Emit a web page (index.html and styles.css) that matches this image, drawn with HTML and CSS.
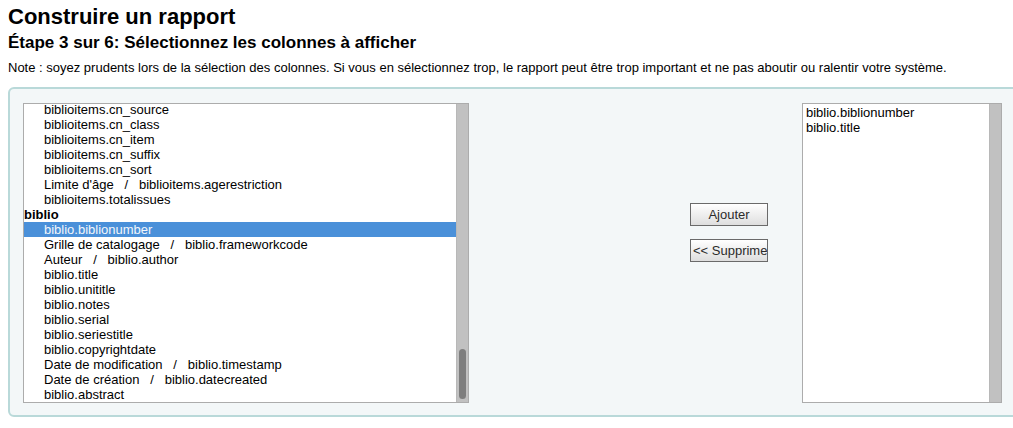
FILE: index.html
```html
<!DOCTYPE html>
<html lang="fr">
<head>
<meta charset="utf-8">
<title>Construire un rapport</title>
<link rel="stylesheet" href="styles.css">
</head>
<body>
<h1 class="title">Construire un rapport</h1>
<h3 class="step">Étape 3 sur 6: Sélectionnez les colonnes à afficher</h3>
<p class="note">Note : soyez prudents lors de la sélection des colonnes. Si vous en sélectionnez trop, le rapport peut être trop important et ne pas aboutir ou ralentir votre système.</p>
<div class="fieldset">
  <div class="listbox left">
    <div class="items">
      <div class="opt">biblioitems.cn_source</div>
      <div class="opt">biblioitems.cn_class</div>
      <div class="opt">biblioitems.cn_item</div>
      <div class="opt">biblioitems.cn_suffix</div>
      <div class="opt">biblioitems.cn_sort</div>
      <div class="opt">Limite d'âge&nbsp;&nbsp;&nbsp;/&nbsp;&nbsp;&nbsp;biblioitems.agerestriction</div>
      <div class="opt">biblioitems.totalissues</div>
      <div class="group">biblio</div>
      <div class="opt selected">biblio.biblionumber</div>
      <div class="opt">Grille de catalogage&nbsp;&nbsp;&nbsp;/&nbsp;&nbsp;&nbsp;biblio.frameworkcode</div>
      <div class="opt">Auteur&nbsp;&nbsp;&nbsp;/&nbsp;&nbsp;&nbsp;biblio.author</div>
      <div class="opt">biblio.title</div>
      <div class="opt">biblio.unititle</div>
      <div class="opt">biblio.notes</div>
      <div class="opt">biblio.serial</div>
      <div class="opt">biblio.seriestitle</div>
      <div class="opt">biblio.copyrightdate</div>
      <div class="opt">Date de modification&nbsp;&nbsp;&nbsp;/&nbsp;&nbsp;&nbsp;biblio.timestamp</div>
      <div class="opt">Date de création&nbsp;&nbsp;&nbsp;/&nbsp;&nbsp;&nbsp;biblio.datecreated</div>
      <div class="opt">biblio.abstract</div>
    </div>
    <div class="scrollbar"><div class="thumb"></div></div>
  </div>
  <div class="actions">
    <button class="btn" type="button">Ajouter</button>
    <button class="btn" type="button">&lt;&lt; Supprimer</button>
  </div>
  <div class="listbox right">
    <div class="items chosen">
      <div class="plain">biblio.biblionumber</div>
      <div class="plain">biblio.title</div>
    </div>
    <div class="scrollbar"></div>
  </div>
</div>
</body>
</html>
```

FILE: styles.css
```css
html, body {
  background: #ffffff;
}
body {
  margin: 0;
  padding: 4px 0 0 8px;
  font-family: "Liberation Sans", Arial, sans-serif;
  color: #000;
  overflow: hidden;
}
.title {
  margin: 0;
  font-size: 22px;
  line-height: 26px;
  font-weight: bold;
}
.step {
  margin: 3px 0 0;
  font-size: 17px;
  line-height: 20px;
  font-weight: bold;
}
.note {
  margin: 7px 0 0;
  font-size: 13px;
  line-height: 16px;
  white-space: nowrap;
}
.fieldset {
  margin-top: 11px;
  width: 1030px;
  box-sizing: border-box;
  border: 2px solid #b9d9d9;
  border-radius: 6px;
  background: #f3f7f8;
  padding: 14px 0 12px 13px;
  display: flex;
  align-items: flex-start;
}
.listbox {
  height: 300px;
  box-sizing: border-box;
  border: 1px solid #acacac;
  background: #fff;
  display: flex;
  overflow: hidden;
  font-size: 13px;
  line-height: 15px;
}
.listbox.left {
  width: 446px;
}
.listbox.right {
  width: 200px;
  margin-left: 34px;
}
.items {
  flex: 1;
  overflow: hidden;
}
.left .items {
  margin-top: -2px;
}
.chosen {
  padding: 1px 0 0 3px;
}
.opt {
  padding-left: 20px;
  white-space: nowrap;
  height: 15px;
}
.group {
  font-weight: bold;
  height: 15px;
}
.selected {
  background: #4a90d9;
  color: #f2f6fb;
}
.plain {
  height: 15px;
  white-space: nowrap;
}
.scrollbar {
  width: 12px;
  flex: none;
  background: #c1c1c1;
  border-left: 1px solid #b8b8b8;
  display: flex;
  flex-direction: column;
  justify-content: flex-end;
  align-items: center;
  padding-bottom: 3px;
  box-sizing: border-box;
}
.thumb {
  width: 7px;
  height: 50px;
  border-radius: 4px;
  background: #7e7e7e;
}
.actions {
  width: 78px;
  margin-left: 221px;
  padding-top: 100px;
  display: flex;
  flex-direction: column;
  gap: 13px;
}
.btn {
  width: 78px;
  height: 23px;
  box-sizing: border-box;
  margin: 0;
  border: 1px solid #6a6a6a;
  border-radius: 0;
  background: linear-gradient(#ffffff, #dedede);
  font-family: "Liberation Sans", Arial, sans-serif;
  font-size: 13px;
  color: #2b2b2b;
  padding: 0 2px;
  white-space: nowrap;
  overflow: hidden;
  text-align: center;
}
.btn + .btn {
  text-align: left;
}
```
